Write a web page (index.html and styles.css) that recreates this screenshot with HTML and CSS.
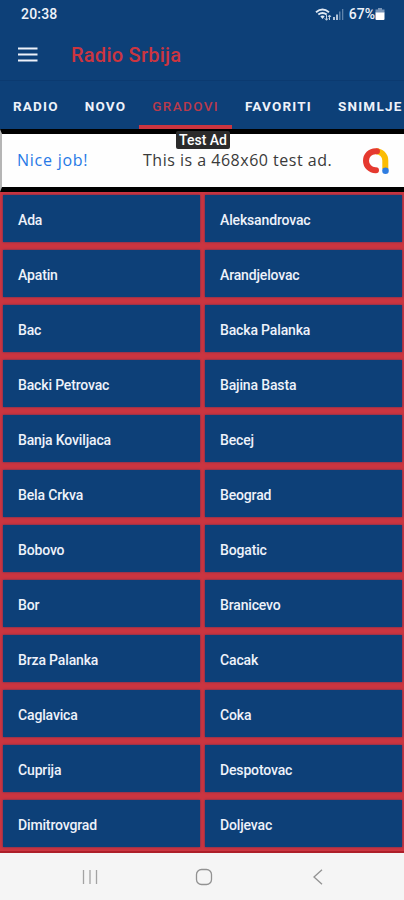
FILE: index.html
```html
<!DOCTYPE html>
<html lang="sr">
<head>
    <meta charset="UTF-8">
    <meta name="viewport" content="width=device-width, initial-scale=1.0">
    <title>Radio Srbija</title>
    <link rel="stylesheet" href="styles.css">
</head>
<body>
    <div class="status-bar">
        <span class="clock">20:38</span>
        <div class="status-icons">
            <svg class="wifi" width="17" height="13" viewBox="0 0 17 13">
                <path d="M1 4.200Q7.500 -1 14 4.200M3.300 6.600Q7.500 3.200 11.700 6.600" fill="none" stroke="#dfe8f3" stroke-width="1.900"/>
                <path d="M5.300 8.300Q7.500 6.500 9.700 8.300L7.500 11z" fill="#dfe8f3"/>
                <path d="M11.500 7v5M9.800 10.300l1.700 2 1.700-2M14.500 12V7.500M13 9l1.500-2L16 9" fill="none" stroke="#c3d1e2" stroke-width="1"/>
            </svg>
            <svg class="signal" width="12" height="12" viewBox="0 0 12 12">
                <path d="M1 9h2v3H1zM4 6.500h2V12H4z" fill="#b4c5d9"/>
                <path d="M7 3.500h1.500V12H7zM10 1h1.300v11H10z" fill="#5f83ab"/>
            </svg>
            <span class="battery-text">67%</span>
            <svg class="battery" width="10" height="13" viewBox="0 0 10 13">
                <path d="M3 0h4v1.500h2.500V5h-9V1.500H3z" fill="#7895b8"/>
                <path d="M.5 4.500h9V11q0 1-1 1h-7q-1 0-1-1z" fill="#fff"/>
            </svg>
        </div>
    </div>

    <div class="toolbar">
        <svg class="menu-icon" width="20" height="15" viewBox="0 0 20 15">
            <path d="M0 1.500h19.500M0 7.500h19.500M0 13.500h19.500" stroke="#eef2fa" stroke-width="2"/>
        </svg>
        <h1 class="title">Radio Srbija</h1>
    </div>

    <div class="tabs">
        <div class="tab">RADIO</div>
        <div class="tab">NOVO</div>
        <div class="tab active">GRADOVI</div>
        <div class="tab">FAVORITI</div>
        <div class="tab">SNIMLJE</div>
    </div>

    <div class="ad">
        <span class="ad-label">Test Ad</span>
        <span class="ad-link">Nice job!</span>
        <span class="ad-text">This is a 468x60 test ad.</span>
        <svg class="ad-logo" width="28" height="28" viewBox="0 0 28 28">
            <path d="M14 4.200A9.300 9.300 0 0 1 23.300 13.500V22" fill="none" stroke="#fbbc04" stroke-width="6"/>
            <path d="M15 4.200H13.500A9.500 9.500 0 0 0 13.500 23.200H14" fill="none" stroke="#e5392f" stroke-width="6" stroke-linecap="round"/>
            <circle cx="23.500" cy="23.800" r="3.300" fill="#2f7de1"/>
        </svg>
    </div>

    <div class="city-grid">
        <div class="city">Ada</div>
        <div class="city">Aleksandrovac</div>
        <div class="city">Apatin</div>
        <div class="city">Arandjelovac</div>
        <div class="city">Bac</div>
        <div class="city">Backa Palanka</div>
        <div class="city">Backi Petrovac</div>
        <div class="city">Bajina Basta</div>
        <div class="city">Banja Koviljaca</div>
        <div class="city">Becej</div>
        <div class="city">Bela Crkva</div>
        <div class="city">Beograd</div>
        <div class="city">Bobovo</div>
        <div class="city">Bogatic</div>
        <div class="city">Bor</div>
        <div class="city">Branicevo</div>
        <div class="city">Brza Palanka</div>
        <div class="city">Cacak</div>
        <div class="city">Caglavica</div>
        <div class="city">Coka</div>
        <div class="city">Cuprija</div>
        <div class="city">Despotovac</div>
        <div class="city">Dimitrovgrad</div>
        <div class="city">Doljevac</div>
    </div>

    <div class="nav-bar">
        <svg width="16" height="16" viewBox="0 0 16 16">
            <path d="M1.500 1v14M8 1v14M14.500 1v14" stroke="#a3a3a3" stroke-width="1.300"/>
        </svg>
        <svg width="18" height="18" viewBox="0 0 18 18">
            <rect x="1.500" y="1.500" width="15" height="15" rx="5" fill="none" stroke="#929292" stroke-width="1.300"/>
        </svg>
        <svg width="16" height="16" viewBox="0 0 16 16">
            <path d="M12 .8L4 8l8 7.200" fill="none" stroke="#929292" stroke-width="1.300"/>
        </svg>
    </div>
</body>
</html>
```

FILE: styles.css
```css
* {
    box-sizing: border-box;
}
body {
    margin: 0;
    width: 404px;
    height: 900px;
    overflow: hidden;
    background-color: #0d4078;
    font-family: Roboto, sans-serif;
    color: #eef2fa;
}
.status-bar {
    display: flex;
    justify-content: space-between;
    align-items: center;
    height: 28px;
    padding: 0 19px 0 21px;
    font-size: 14px;
    font-weight: 500;
}
.clock {
    letter-spacing: 0.2px;
}
.status-icons {
    display: flex;
    align-items: center;
}
.battery-text {
    margin-left: 5px;
}
.toolbar {
    display: flex;
    align-items: center;
    height: 52px;
    padding: 2px 18px 0;
}
.menu-icon {
    margin-top: -2px;
}
.title {
    margin: 0 0 0 33px;
    font-size: 20px;
    font-weight: 500;
    letter-spacing: 0.25px;
    color: #cb3540;
}
.tabs {
    display: flex;
    height: 49px;
    overflow: hidden;
    border-top: 1px solid #0b3a70;
}
.tab {
    flex: none;
    padding: 0 13px;
    font-size: 13.5px;
    font-weight: 700;
    line-height: 50px;
    letter-spacing: 1.2px;
}
.tab.active {
    font-weight: 500;
    letter-spacing: 1.35px;
    color: #b83a4c;
    border-bottom: 4px solid #cb3540;
}
.ad {
    position: relative;
    display: flex;
    align-items: center;
    height: 63px;
    padding: 0 14px 0 15px;
    background-color: #fefefe;
    border: solid #000;
    border-width: 5px 0;
    border-left: 2px solid #b5b5b5;
    font-family: "Open Sans", sans-serif;
}
.ad-label {
    position: absolute;
    top: -3px;
    left: 174px;
    width: 54px;
    height: 18px;
    background-color: #2b2b2b;
    border-radius: 2px;
    color: #fff;
    font-family: Roboto, sans-serif;
    font-size: 14px;
    font-weight: 500;
    line-height: 18px;
    text-align: center;
}
.ad-link {
    width: 126px;
    margin-top: -2px;
    color: #2779e6;
    font-size: 16px;
    letter-spacing: 0.75px;
}
.ad-text {
    flex: 1;
    margin-top: -2px;
    color: #3a3a3a;
    font-size: 16px;
    letter-spacing: 0.5px;
    white-space: nowrap;
}
.city-grid {
    display: grid;
    grid-template-columns: 197px 197px;
    grid-auto-rows: 47px;
    gap: 8px 5px;
    height: 661px;
    padding: 3px 2px 0 3px;
    background-color: #cb3540;
    border-bottom: 2px solid #ad1f2a;
}
.city {
    padding-left: 15px;
    background-color: #0d4078;
    box-shadow: 0 0 2px #4b2f5c;
    font-size: 14px;
    font-weight: 500;
    line-height: 50px;
    letter-spacing: -0.15px;
}
.nav-bar {
    display: flex;
    justify-content: space-between;
    align-items: center;
    height: 47px;
    padding: 0 78px 0 82px;
    background-color: #f5f5f5;
}
```
